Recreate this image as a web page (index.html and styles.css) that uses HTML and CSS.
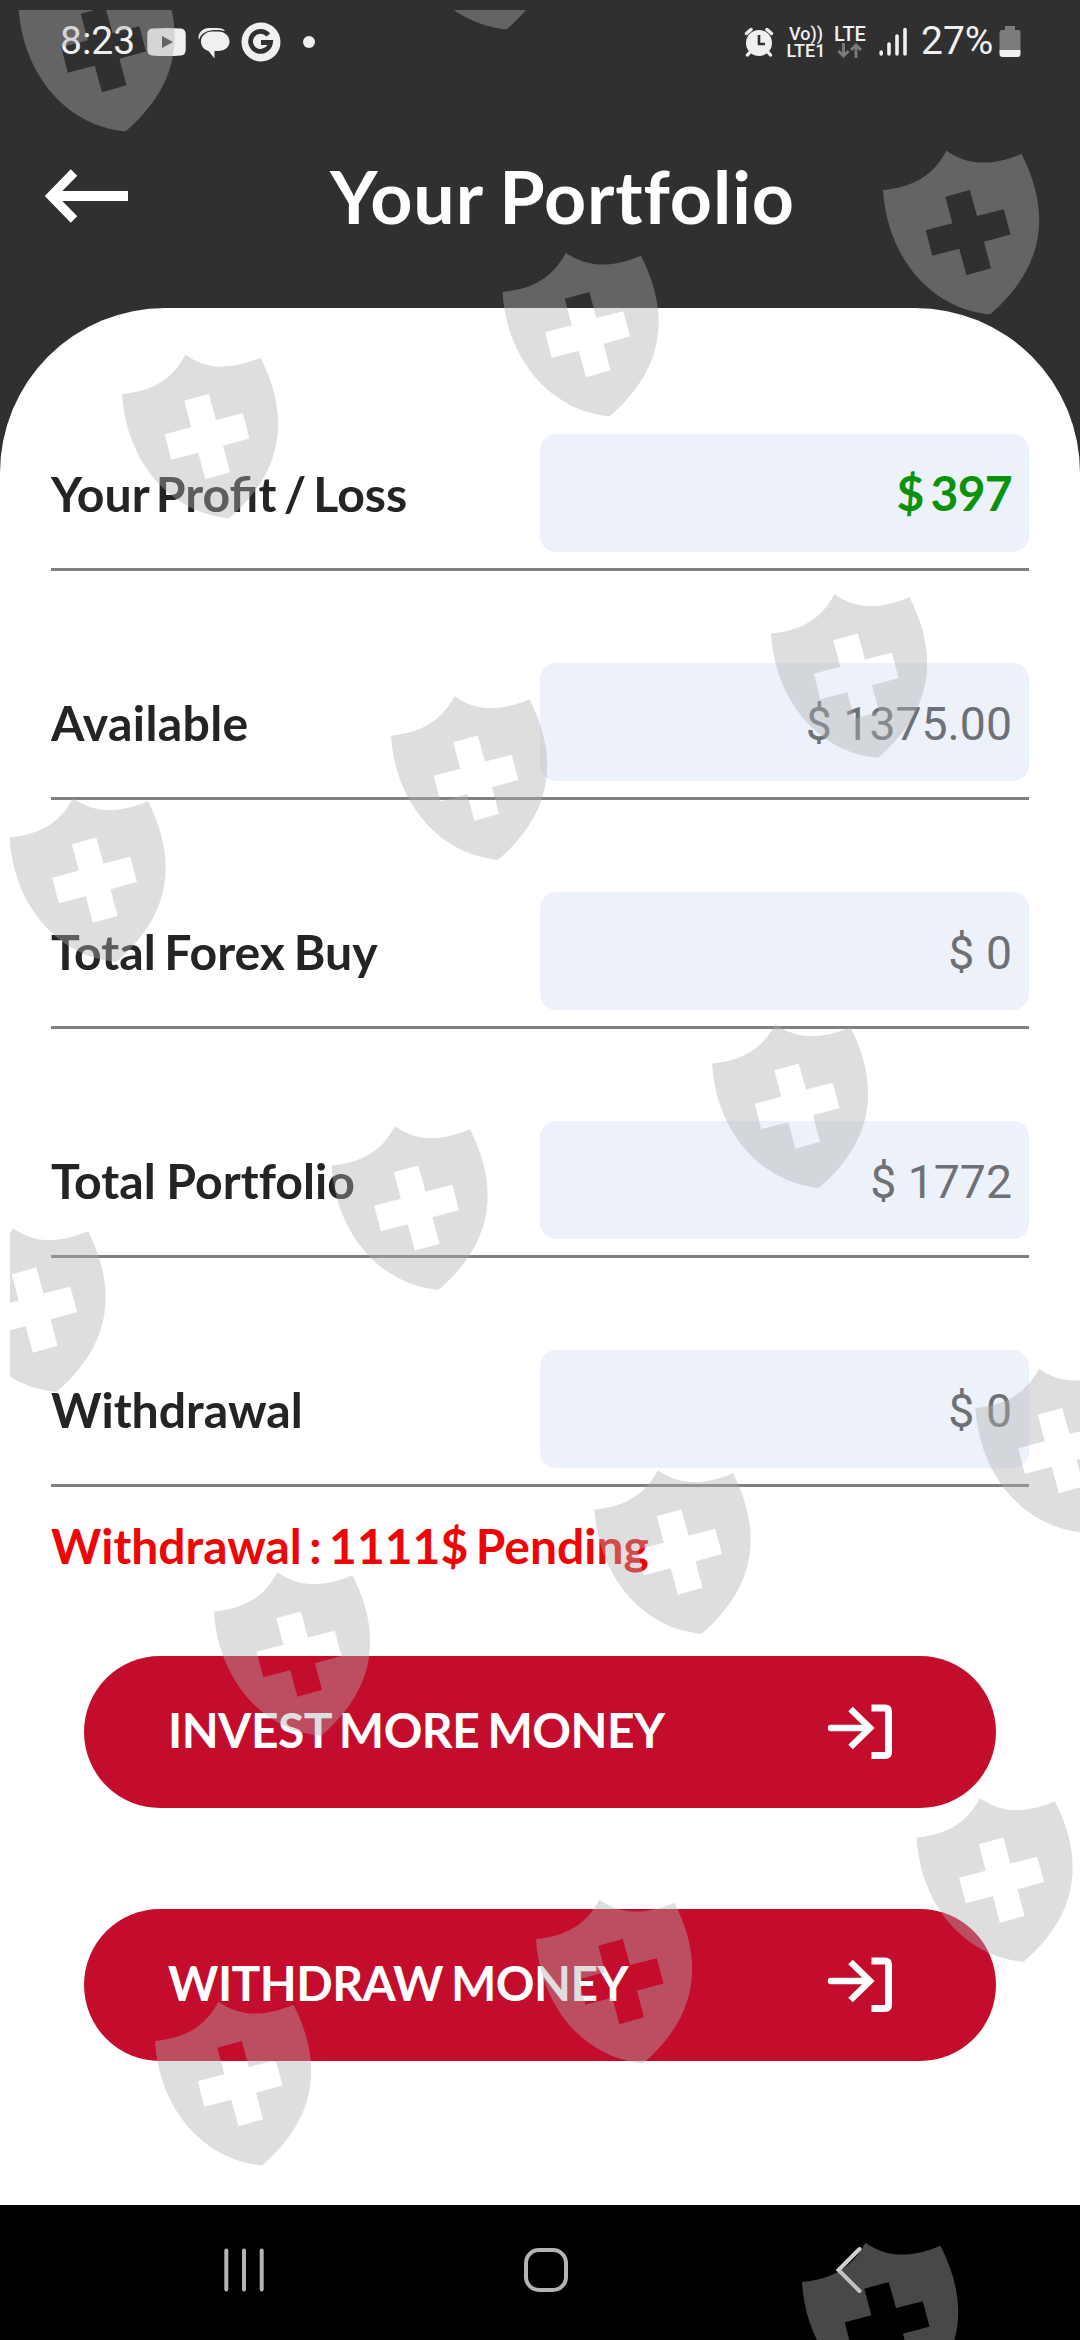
FILE: index.html
```html
<!DOCTYPE html>
<html lang="en">
<head>
    <meta charset="UTF-8">
    <meta name="viewport" content="width=device-width, initial-scale=1.0">
    <title>Your Portfolio</title>
    <link rel="stylesheet" href="styles.css">
</head>
<body>
    <div class="screen">
        <!-- Status bar -->
        <div class="status-bar">
            <div class="status-left">
                <span class="clock">8:23</span>
                <svg class="icon-youtube" width="39" height="28" viewBox="0 0 39 28">
                    <path fill="#f0f0f0" fill-rule="evenodd" d="M5 .5Q19.500-.5 34 .5Q38.500 1 38.700 6V22Q38.500 27 34 27.500Q19.500 28.500 5 27.500Q.5 27 .3 22V6Q.5 1 5 .5ZM15 8V20L26 14Z"/>
                </svg>
                <svg class="icon-chat" width="32" height="31" viewBox="0 0 32 31">
                    <path fill="#f0f0f0" d="M1 12C-1 6 4 0 11 0H19C23 0 26 1 27 3C22 1.500 15 1.500 10 3C5 4.500 2 8 1 12Z"/>
                    <path fill="#f0f0f0" d="M14 3.500H20C27 3.500 31.500 8 31.500 13.500C31.500 19 27 23 20 23H16.500V30.500L10.500 23C5.500 21.500 3 17.500 3 13.500C3 8 7.500 3.500 14 3.500Z"/>
                </svg>
                <svg class="icon-google" width="40" height="40" viewBox="0 0 40 40">
                    <circle cx="20" cy="20" r="19.500" fill="#f0f0f0"/>
                    <path fill="none" stroke="#303030" stroke-width="4.800" d="M27.300 13A10 10 0 1 0 29.500 20.500H20"/>
                </svg>
                <span class="dot"></span>
            </div>
            <div class="status-right">
                <svg class="icon-alarm" width="30" height="30" viewBox="0 0 30 30">
                    <path stroke="#f0f0f0" stroke-width="3.400" stroke-linecap="round" d="M2.500 6.500L7 2.500M27.500 6.500L23 2.500M7 24L3.500 28M23 24L26.500 28"/>
                    <circle cx="15" cy="16" r="13" fill="#f0f0f0"/>
                    <path fill="none" stroke="#303030" stroke-width="2.600" d="M15 8V17H21"/>
                </svg>
                <div class="volte">
                    <span>Vo))</span>
                    <span>LTE1</span>
                </div>
                <div class="lte">
                    <span>LTE</span>
                    <svg width="26" height="15" viewBox="0 0 26 15">
                        <path fill="none" stroke="#7c7c7c" stroke-width="2.800" d="M6.500 0V13M1.500 8L6.500 13L11.500 8M19 15V2M14 7L19 2L24 7"/>
                    </svg>
                </div>
                <svg class="icon-signal" width="28" height="30" viewBox="0 0 28 30">
                    <path stroke="#f0f0f0" stroke-width="3.600" stroke-linecap="round" d="M2.200 25V27M10 17V27M18 9V27M26 2.500V27"/>
                </svg>
                <span class="percent">27%</span>
                <svg class="icon-battery" width="22" height="32" viewBox="0 0 22 32">
                    <path fill="#7c7c7c" d="M6 0H16V4H19Q21.500 4 21.500 7V24H.5V7Q.5 4 3 4H6Z"/>
                    <path fill="#f0f0f0" d="M.5 24H21.500V28Q21.500 31 18.500 31H3.500Q.5 31 .5 28Z"/>
                </svg>
            </div>
        </div>

        <div class="header">
            <svg class="back" width="84" height="54" viewBox="0 0 84 54">
                <path fill="none" stroke="#fff" stroke-width="10" d="M83 27H9"/>
                <path fill="none" stroke="#fff" stroke-width="9" stroke-linejoin="miter" d="M29 3.500L6 27L29 50.500"/>
            </svg>
            <h1>Your Portfolio</h1>
        </div>

        <div class="panel">
            <div class="row">
                <span class="label tight">Your Profit / Loss</span>
                <span class="field profit">$ 397</span>
            </div>
            <div class="row">
                <span class="label wide">Available</span>
                <span class="field">$ 1375.00</span>
            </div>
            <div class="row">
                <span class="label">Total Forex Buy</span>
                <span class="field">$ 0</span>
            </div>
            <div class="row">
                <span class="label no-liga">Total Portfolio</span>
                <span class="field">$ 1772</span>
            </div>
            <div class="row">
                <span class="label">Withdrawal</span>
                <span class="field">$ 0</span>
            </div>

            <p class="pending">Withdrawal : 1111$ Pending</p>

            <button class="action">
                <span class="invest">INVEST MORE MONEY</span>
                <svg width="66" height="56" viewBox="0 0 66 56">
                    <path fill="none" stroke="#fff" stroke-width="6.500" stroke-linecap="round" d="M4 24H42"/>
                    <path fill="none" stroke="#fff" stroke-width="6.500" d="M23.500 5L43 24L23.500 43"/>
                    <path fill="none" stroke="#fff" stroke-width="7" d="M44.500 4H58Q61.500 4 61.500 7.500V48Q61.500 51.500 58 51.500H44.500"/>
                </svg>
            </button>
            <button class="action">
                <span class="withdraw">WITHDRAW MONEY</span>
                <svg width="66" height="56" viewBox="0 0 66 56">
                    <path fill="none" stroke="#fff" stroke-width="6.500" stroke-linecap="round" d="M4 24H42"/>
                    <path fill="none" stroke="#fff" stroke-width="6.500" d="M23.500 5L43 24L23.500 43"/>
                    <path fill="none" stroke="#fff" stroke-width="7" d="M44.500 4H58Q61.500 4 61.500 7.500V48Q61.500 51.500 58 51.500H44.500"/>
                </svg>
            </button>
        </div>

        <!-- Navigation bar -->
        <div class="nav-bar">
            <svg width="40" height="44" viewBox="0 0 40 44">
                <path stroke="#b4b4b4" stroke-width="4" stroke-linecap="round" d="M2.300 2.500V41.500M20 2.500V41.500M37.700 2.500V41.500"/>
            </svg>
            <svg class="home" width="44" height="44" viewBox="0 0 44 44">
                <rect x="2" y="2" width="40" height="40" rx="13" fill="none" stroke="#b4b4b4" stroke-width="4"/>
            </svg>
            <svg width="28" height="48" viewBox="0 0 28 48">
                <path fill="none" stroke="#d0d0d0" stroke-width="4" stroke-linecap="round" d="M24.500 3L3.500 24L24.500 45"/>
            </svg>
        </div>

        <!-- Shield pattern over the whole screen -->
        <svg class="shields" width="1080" height="2340" viewBox="0 0 1080 2340">
            <defs>
                <clipPath id="area"><rect x="10" y="10" width="1070" height="2330"/></clipPath>
                <path id="shield" fill-rule="evenodd" d="M0 40C30 37 50 26 63.400 .7C85 16 110 16 138.500 3.700C167 60 164 115 107.500 164Q104 164.500 100 163.500C45 155 4 105 0 40ZM62.300 46.700L86.800 40L94 66L120.800 59.300L127.500 84.500L101 91.700L108 118.300L83.400 125.300L76.300 98.700L49.300 105.700L42.700 80.300L69.300 73.300Z"/>
            </defs>
            <g clip-path="url(#area)" fill="#afafaf" fill-opacity="0.41">
                <use href="#shield" x="18.500" y="-33"/>
                <use href="#shield" x="399.500" y="-135"/>
                <use href="#shield" x="883" y="150"/>
                <use href="#shield" x="502.500" y="252"/>
                <use href="#shield" x="122" y="354"/>
                <use href="#shield" x="771" y="593.500"/>
                <use href="#shield" x="391" y="695.500"/>
                <use href="#shield" x="9.500" y="797.500"/>
                <use href="#shield" x="712" y="1023.500"/>
                <use href="#shield" x="331.500" y="1125.500"/>
                <use href="#shield" x="-50.500" y="1227.500"/>
                <use href="#shield" x="975.500" y="1368"/>
                <use href="#shield" x="594.500" y="1469.500"/>
                <use href="#shield" x="214" y="1571.500"/>
                <use href="#shield" x="916.500" y="1797.500"/>
                <use href="#shield" x="536" y="1899"/>
                <use href="#shield" x="155" y="2001"/>
                <use href="#shield" x="802" y="2242"/>
            </g>
        </svg>
    </div>
</body>
</html>
```
FILE: styles.css
```css
* {
    box-sizing: border-box;
}
body {
    margin: 0;
    background-color: #303030;
    font-family: Lato, sans-serif;
}
.screen {
    position: relative;
    display: flex;
    flex-direction: column;
    width: 1080px;
    height: 2340px;
    overflow: hidden;
    background-color: #303030;
}
svg {
    display: block;
    flex: none;
}
.status-bar {
    display: flex;
    justify-content: space-between;
    height: 83px;
    padding: 0 59px 0 60px;
    font-family: Roboto, sans-serif;
    color: #f0f0f0;
}
.status-left,
.status-right {
    display: flex;
    align-items: center;
}
.clock,
.percent {
    font-size: 39px;
    line-height: 83px;
}
.clock {
    width: 87px;
}
.icon-chat {
    margin: 3px 11px 0 12px;
}
.dot {
    width: 12px;
    height: 12px;
    margin-left: 22px;
    border-radius: 50%;
    background-color: #f0f0f0;
}
.volte,
.lte {
    display: flex;
    flex-direction: column;
    align-items: center;
    font-weight: 500;
    line-height: 17px;
}
.volte {
    width: 40px;
    margin-left: 12px;
    font-size: 18px;
}
.lte {
    width: 34px;
    margin: 0 12px 0 7px;
    font-size: 20px;
}
.icon-signal {
    margin-right: 14px;
}
.percent {
    width: 78px;
}
.header {
    display: flex;
    align-items: center;
    height: 225px;
    padding-left: 45px;
}
h1 {
    margin: 0 0 0 201px;
    font-size: 73.5px;
    font-weight: 700;
    line-height: 88px;
    letter-spacing: 0.9px;
    word-spacing: -2px;
    color: #fff;
}
.panel {
    flex: 1;
    padding: 126px 51px 0;
    border-radius: 165px 165px 0 0;
    background-color: #fff;
}
.row {
    display: flex;
    height: 137px;
    margin-bottom: 92px;
    border-bottom: 3px solid #808080;
}
.label,
.field {
    width: 489px;
    height: 118px;
    line-height: 118px;
    white-space: nowrap;
}
.label {
    font-size: 48.2px;
    font-weight: 700;
    word-spacing: -3px;
    color: #242424;
}
.tight {
    word-spacing: -4.5px;
}
.wide {
    letter-spacing: 0.35px;
}
.no-liga {
    font-variant-ligatures: none;
    word-spacing: -1px;
}
.field {
    padding: 2px 17px 0 0;
    border-radius: 16px;
    background-color: #edf1fa;
    font-family: Roboto, sans-serif;
    font-size: 46.4px;
    text-align: right;
    color: #6d7075;
}
.profit {
    padding-top: 0;
    font-family: Lato, sans-serif;
    font-size: 48px;
    font-weight: 700;
    letter-spacing: -0.7px;
    word-spacing: -4px;
    color: #0a930a;
}
.pending {
    margin: -63px 0 80px;
    font-size: 48px;
    font-weight: 700;
    line-height: 60px;
    word-spacing: -4.2px;
    color: #ee0505;
}
.action {
    display: flex;
    align-items: center;
    justify-content: space-between;
    width: 912px;
    height: 152px;
    margin: 0 33px 101px;
    padding: 0 103px 0 84px;
    border: none;
    border-radius: 76px;
    background-color: #c40d2c;
    font-family: Lato, sans-serif;
    font-size: 48px;
    font-weight: 700;
    color: #fff;
    cursor: pointer;
}
.action span {
    margin-bottom: 5px;
    letter-spacing: -0.55px;
    word-spacing: -2.8px;
}
.nav-bar {
    display: flex;
    justify-content: space-between;
    align-items: center;
    height: 135px;
    padding: 0 217px 5px 224px;
    background-color: #000;
}
.home {
    margin-right: 8px;
}
.shields {
    position: absolute;
    top: 0;
    left: 0;
    pointer-events: none;
}
```
